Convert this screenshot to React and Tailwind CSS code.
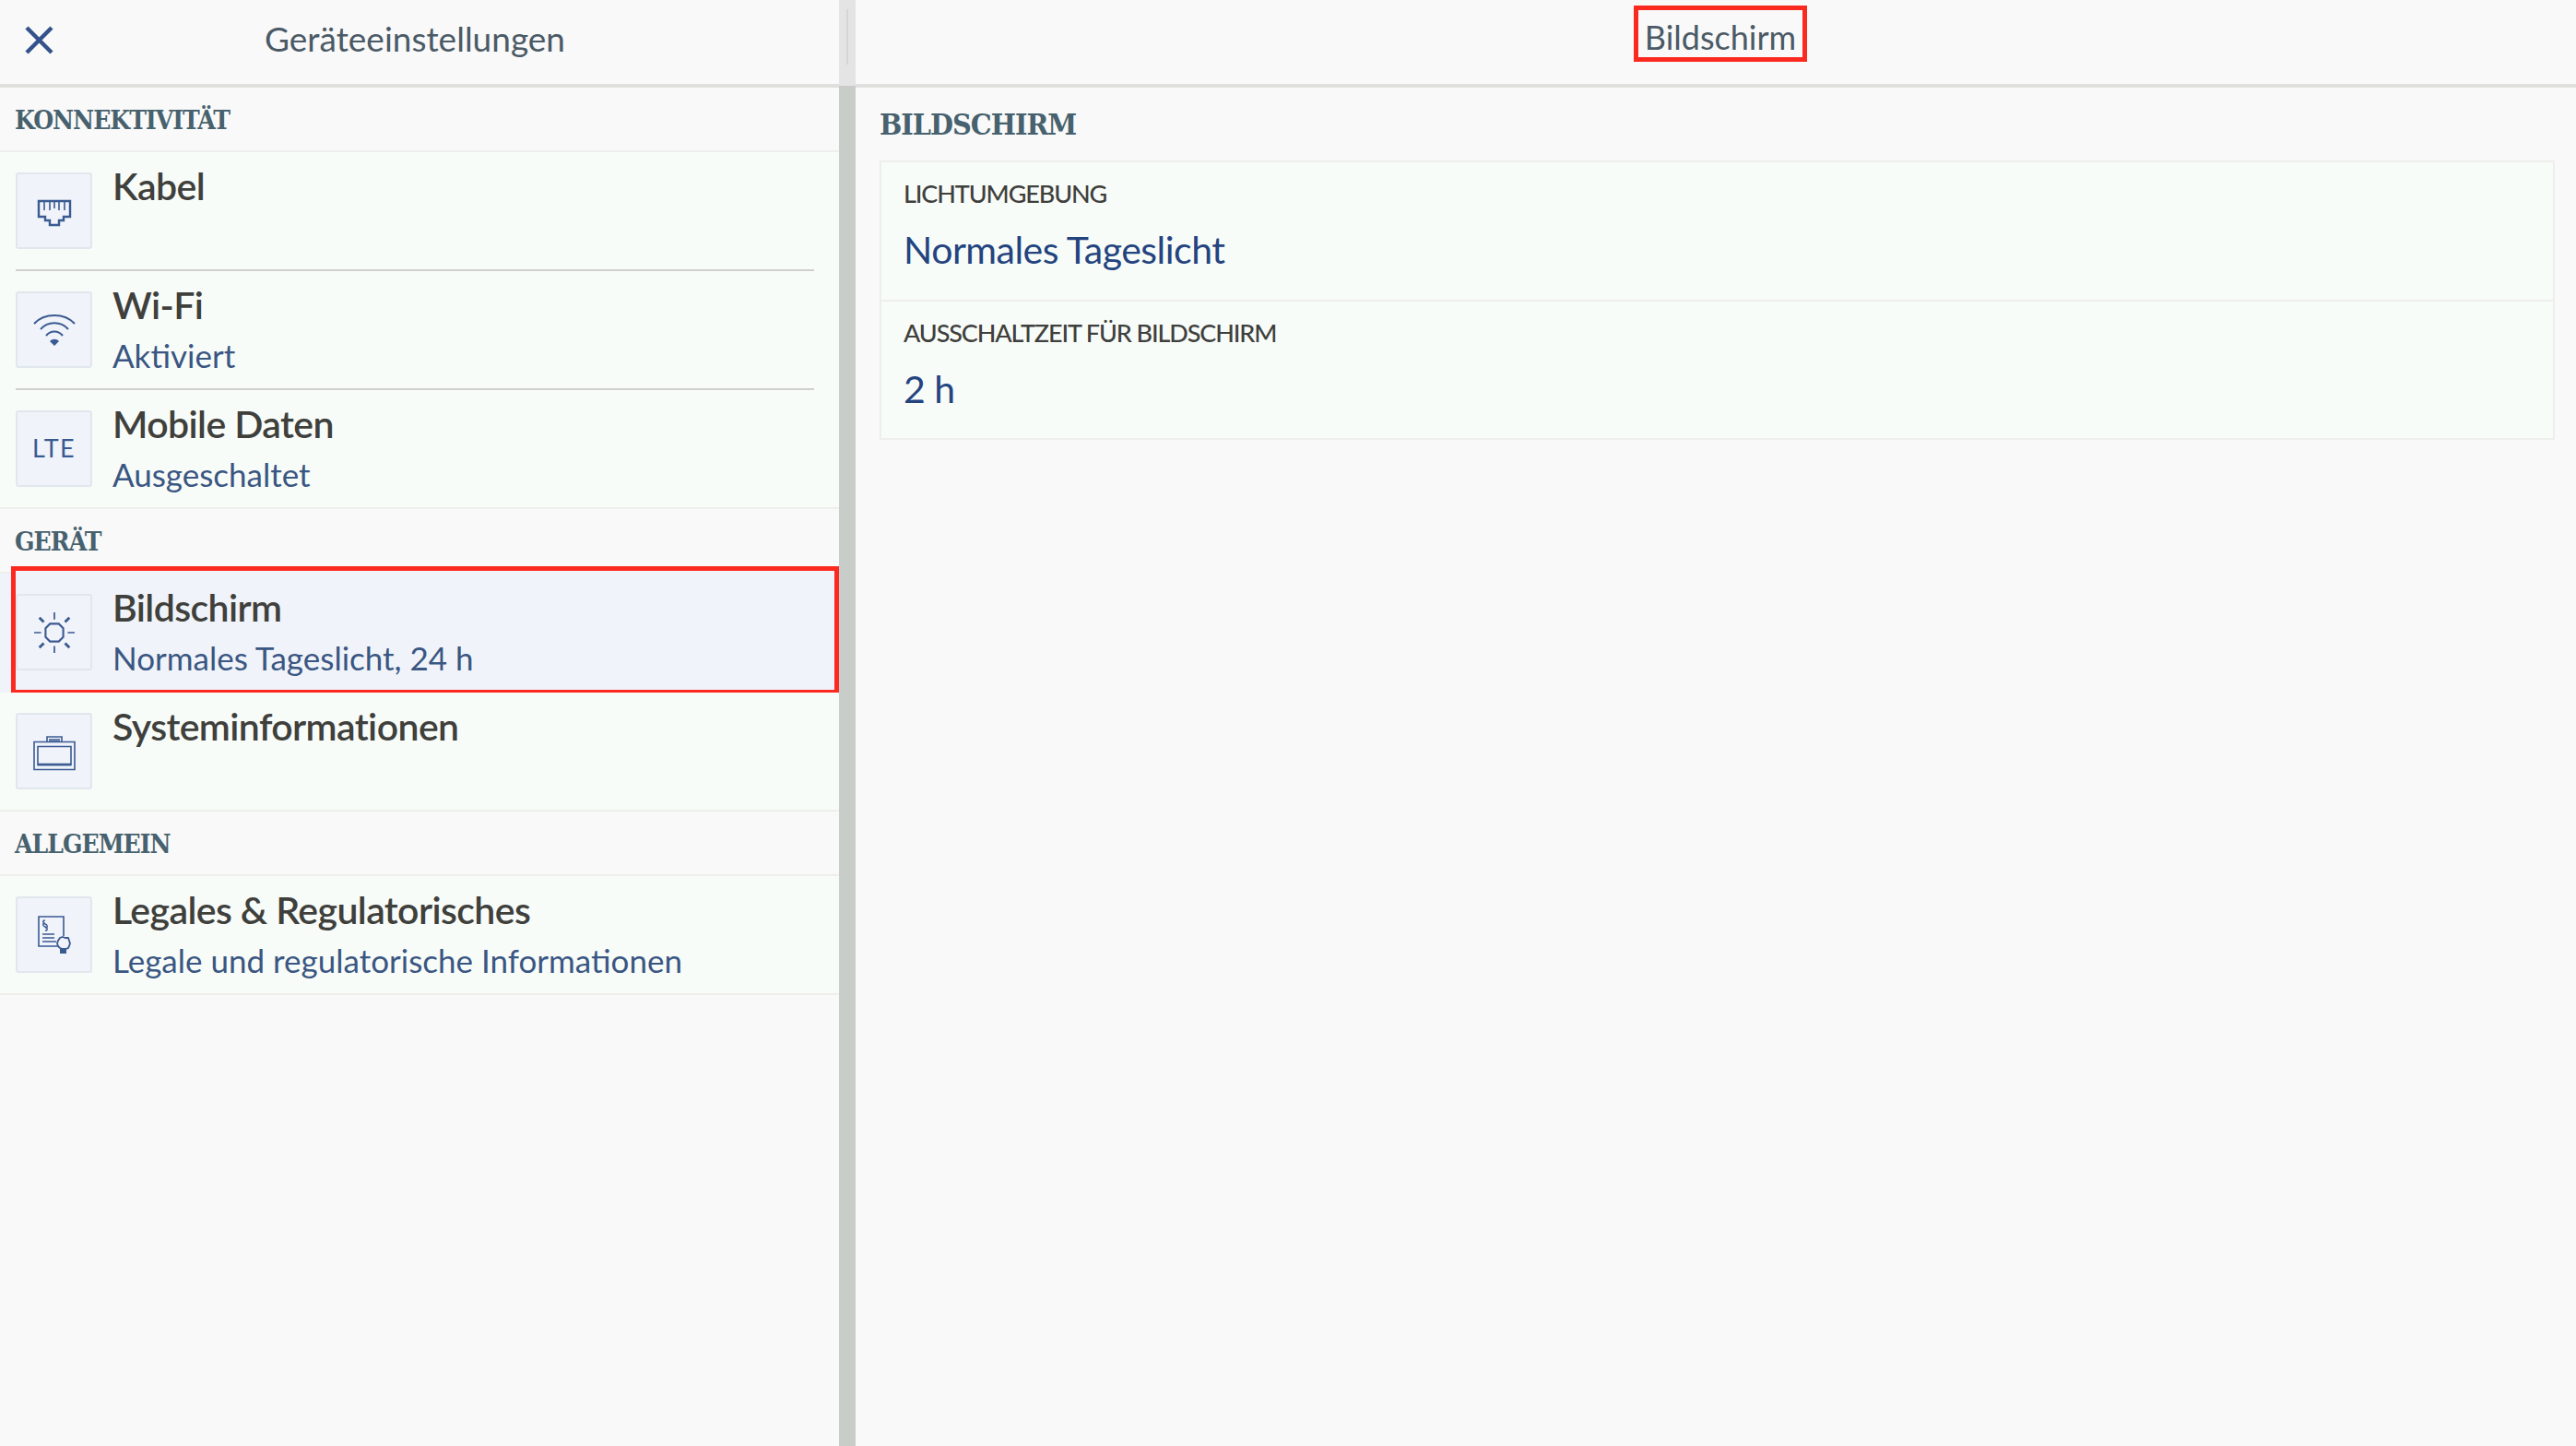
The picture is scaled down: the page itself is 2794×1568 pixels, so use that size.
import React from "react";

const SANS = "font-['Lato','Noto_Sans',sans-serif]";

function CableIcon() {
  return (
    <svg className="mt-[5px]" width="38" height="30" viewBox="0 0 38 30" fill="none" stroke="#3a5a92">
      <path d="M2 2h34v17h-7v4h-5v5H14v-5H9v-4H2z" strokeWidth="2.4" />
      <path d="M8 3v9M14 3v9M19 3v7M24 3v9M30 3v9" strokeWidth="1.6" />
    </svg>
  );
}

function WifiIcon() {
  return (
    <svg width="46" height="36" viewBox="0 0 46 36" fill="none" stroke="#3a5a92" strokeWidth="2">
      <path d="M1 11C12 -1 34 -1 45 11" />
      <path d="M8 17C16 8 30 8 38 17" />
      <path d="M14 24C19 18 27 18 32 24" />
      <path d="M18 30c3-3 7-3 10 0l-5 5z" fill="#3a5a92" stroke="none" />
    </svg>
  );
}

function SunIcon() {
  return (
    <svg width="46" height="46" viewBox="0 0 48 48" fill="none" stroke="#3a5a92">
      <path d="M19 14h10l5 5v10l-5 5H19l-5-5V19z" strokeWidth="2.200" />
      <path d="M24 1v8M24 39v8M1 24h8M39 24h8" strokeWidth="1.8" />
      <path d="M7 7l5 5M41 7l-5 5M7 41l5-5M41 41l-5-5" strokeWidth="3" />
    </svg>
  );
}

function CaseIcon() {
  return (
    <svg className="mt-[4px]" width="46" height="38" viewBox="0 0 46 38" fill="none" stroke="#3a5a92">
      <path d="M1 6.500h44v30H1z" strokeWidth="1.6" />
      <path d="M15 6V1h16v5" strokeWidth="1.6" />
      <path d="M17 3h12v4H17z" fill="#3a5a92" opacity="0.75" stroke="none" />
      <path d="M5 11.500h36v20H5z" strokeWidth="1.6" />
      <path d="M5 31h36" strokeWidth="2.6" />
    </svg>
  );
}

function LegalIcon() {
  return (
    <svg width="36" height="42" viewBox="0 0 36 42" fill="none" stroke="#3a5a92">
      <path d="M22 33H1V1h27v21" strokeWidth="1.6" />
      <path d="M8 5c-3 0-3 3 0 4s3 4 0 4M8 8c-3 0-3 3 0 4s3 4 0 4" strokeWidth="1.4" />
      <path d="M5 20h13M5 24h13M5 28h15" strokeWidth="1.6" />
      <path d="M27 23l3 1 3 0 1 3 1 3-1 3-1 2-3 1-3 0-3-1-2-2-1-3 1-3 2-3z" strokeWidth="1.8" />
      <path d="M24 36h7v5h-7z" fill="#3a5a92" stroke="none" />
    </svg>
  );
}

function ListRow({ icon, title, sub, line, active }) {
  return (
    <div className={`relative flex h-[129px] pl-[17px] ${active ? "bg-[#f0f3f9]" : "bg-[#f8fcf9]"}`}>
      <div className="mt-[22px] flex h-[83px] w-[83px] items-center justify-center rounded-[3px] border-2 border-[#e0e7ed] bg-[#f0f3f9] text-[27px] tracking-wider text-[#3a5a92]">
        {icon}
      </div>
      <div className="ml-[22px] pt-[13px]">
        <div className="text-[41px] leading-[48px] font-semibold tracking-[-0.6px] text-[#3f403c]">{title}</div>
        {sub && <div className="mt-[8px] text-[35px] leading-[44px] text-[#3a5682]">{sub}</div>}
      </div>
      {line === "inset" && <div className="absolute right-[27px] bottom-0 left-[17px] h-[2px] bg-[#cfcfcb]" />}
      {line === "full" && <div className="absolute right-0 bottom-0 left-0 h-[2px] bg-[#eeeeec]" />}
      {active && <div className="absolute top-[-3px] right-0 left-[12px] h-[3px] bg-[#f0f3f9]" />}
      {active && <div className="absolute top-[-8px] right-0 bottom-[-2px] left-[12px] border-[5px] border-[#fb2a20]" />}
    </div>
  );
}

function SectionHead({ children }) {
  return (
    <div className="flex h-[70px] items-center border-b-2 border-[#eeeeec] pt-[4px] pl-[16px] font-['DejaVu_Serif',serif] text-[28px] font-bold tracking-[-1px] text-[#47626e] font-stretch-condensed">
      {children}
    </div>
  );
}

function Setting({ label, value, border, height }) {
  return (
    <div className={`${height} pt-[17px] pl-[24px] ${border ? "border-b-2 border-[#eeeeec]" : ""}`}>
      <div className="text-[27px] leading-[34px] font-medium tracking-[-1.1px] text-[#3f403c]">{label}</div>
      <div className="mt-[18px] text-[41px] leading-[52px] tracking-[-0.5px] text-[#24447f]">{value}</div>
    </div>
  );
}

export default function App() {
  return (
    <div className={`flex h-[1568px] w-[2794px] overflow-hidden bg-[#f9f9f9] ${SANS}`}>
      <div className="w-[910px] shrink-0">
        <div className="flex h-[95px] items-center border-b-4 border-[#dfdfdd]">
          <svg className="mb-[5px] ml-[27px]" width="31" height="31" viewBox="0 0 31 31" stroke="#34528a" strokeWidth="4.500" fill="none">
            <path d="M2 2l27 27M29 2L2 29" />
          </svg>
          <div className="flex-1 pr-[68px] pb-[7px] text-center text-[37px] text-[#4b5a66]">Geräteeinstellungen</div>
        </div>
        <SectionHead>KONNEKTIVITÄT</SectionHead>
        <ListRow icon={<CableIcon />} title="Kabel" line="inset" />
        <ListRow icon={<WifiIcon />} title="Wi-Fi" sub="Aktiviert" line="inset" />
        <ListRow icon="LTE" title="Mobile Daten" sub="Ausgeschaltet" line="full" />
        <SectionHead>GERÄT</SectionHead>
        <ListRow icon={<SunIcon />} title="Bildschirm" sub="Normales Tageslicht, 24 h" active />
        <ListRow icon={<CaseIcon />} title="Systeminformationen" line="full" />
        <SectionHead>ALLGEMEIN</SectionHead>
        <ListRow icon={<LegalIcon />} title="Legales & Regulatorisches" sub="Legale und regulatorische Informationen" line="full" />
      </div>

      <div className="flex w-[18px] shrink-0 flex-col">
        <div className="flex h-[93px] justify-center bg-[#e4e4e4] pt-[10px]">
          <div className="h-[60px] w-[2px] bg-[#d4d6d5]" />
        </div>
        <div className="flex-1 bg-[#c8cdca]" />
      </div>

      <div className="flex-1">
        <div className="flex h-[95px] items-start justify-center border-b-4 border-[#dfdfdd] pt-[6px] pl-[10px]">
          <div className="flex h-[61px] w-[188px] items-center justify-center border-[5px] border-[#fb2a20] pt-[6px] text-[36px] text-[#4b5a66]">
            Bildschirm
          </div>
        </div>
        <div className="pr-[23px] pl-[26px]">
          <div className="flex h-[79px] items-center font-['DejaVu_Serif',serif] text-[32px] font-bold tracking-[-1px] text-[#47626e] font-stretch-condensed">
            BILDSCHIRM
          </div>
          <div className="border-2 border-[#eeeeec] bg-[#f8fcf9]">
            <Setting label="LICHTUMGEBUNG" value="Normales Tageslicht" border height="h-[151px]" />
            <Setting label="AUSSCHALTZEIT FÜR BILDSCHIRM" value="2 h" height="h-[148px]" />
          </div>
        </div>
      </div>
    </div>
  );
}
